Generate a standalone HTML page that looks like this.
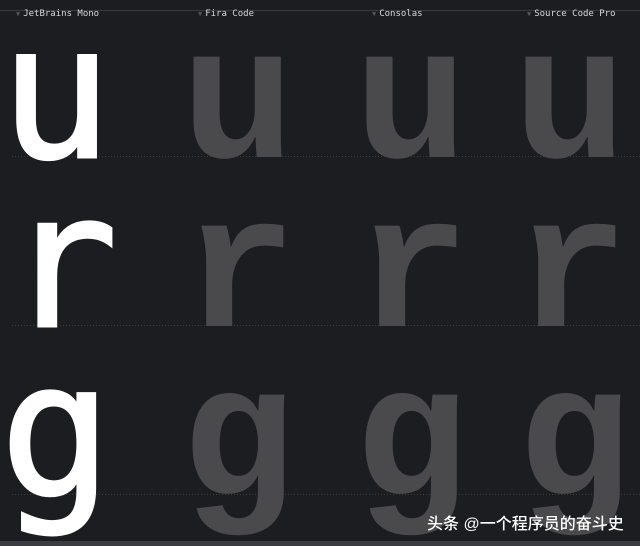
<!DOCTYPE html>
<html><head><meta charset="utf-8"><style>
html,body{margin:0;padding:0;background:#1c1d21;}
body{width:640px;height:546px;overflow:hidden;position:relative;}
.lbl{position:absolute;top:9px;font:9px "DejaVu Sans Mono","Liberation Mono",monospace;color:#d8d8d8;}
.tri{color:#555;font-size:7px;margin-right:3px}
.wm{position:absolute;left:427px;top:510px;font:16px "Liberation Sans","Noto Sans CJK SC",sans-serif;color:#fff;font-weight:500}
</style></head><body>
<div style="position:absolute;left:0;top:10px;width:640px;height:1px;background:#3a3b40"></div>
<div class="lbl" style="left:16px"><span class="tri">▼</span>JetBrains Mono</div>
<div class="lbl" style="left:198px"><span class="tri">▼</span>Fira Code</div>
<div class="lbl" style="left:372px"><span class="tri">▼</span>Consolas</div>
<div class="lbl" style="left:527px"><span class="tri">▼</span>Source Code Pro</div>
<svg width="640" height="546" style="position:absolute;left:0;top:0">
<g stroke="#3a3b40" stroke-width="1" stroke-dasharray="1 2">
<line x1="12" y1="156.5" x2="640" y2="156.5"/>
<line x1="12" y1="325.5" x2="640" y2="325.5"/>
<line x1="12" y1="494.5" x2="640" y2="494.5"/>
</g>
<g font-family="DejaVu Sans Mono" font-size="186" fill="#fff" text-anchor="middle" stroke="#fff" stroke-width="3">
<text x="56" y="157">u</text><text x="62" y="326">r</text><text x="56" y="495">g</text>
</g>
<g font-family="Liberation Mono" font-weight="bold" font-size="190" fill="#4a4a4d" text-anchor="middle">
<text x="238" y="157">u</text><text x="240" y="326">r</text><text x="238" y="495">g</text>
<text x="411" y="157">u</text><text x="413" y="326">r</text><text x="411" y="495">g</text>
<text x="570" y="157">u</text><text x="572" y="326">r</text><text x="574" y="495">g</text>
</g>
<rect x="0" y="541" width="640" height="5" fill="#3b3c40"/>
</svg>
<div class="wm">头条 @一个程序员的奋斗史</div>
</body></html>
